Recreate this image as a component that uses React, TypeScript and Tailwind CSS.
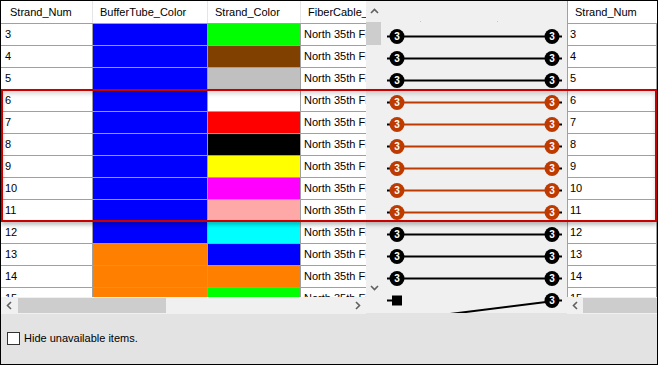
import React from "react";

const rows = [
  { n: 3, tube: "bg-[#0000ff]", strand: "bg-[#00ff00]" },
  { n: 4, tube: "bg-[#0000ff]", strand: "bg-[#804000]" },
  { n: 5, tube: "bg-[#0000ff]", strand: "bg-[#c0c0c0]" },
  { n: 6, tube: "bg-[#0000ff]", strand: "bg-white" },
  { n: 7, tube: "bg-[#0000ff]", strand: "bg-[#ff0000]" },
  { n: 8, tube: "bg-[#0000ff]", strand: "bg-black" },
  { n: 9, tube: "bg-[#0000ff]", strand: "bg-[#ffff00]" },
  { n: 10, tube: "bg-[#0000ff]", strand: "bg-[#ff00ff]" },
  { n: 11, tube: "bg-[#0000ff]", strand: "bg-[#ffa8a8]" },
  { n: 12, tube: "bg-[#0000ff]", strand: "bg-[#00ffff]" },
  { n: 13, tube: "bg-[#ff8000]", strand: "bg-[#0000ff]" },
  { n: 14, tube: "bg-[#ff8000]", strand: "bg-[#ff8000]" },
  { n: 15, tube: "bg-[#ff8000]", strand: "bg-[#00ff00]" },
];

const isSelected = (n: number) => n >= 6 && n <= 11;

function Chevron({ dir }: { dir: "up" | "down" | "left" | "right" }) {
  const d = {
    up: "M1 6 L4.5 2.5 L8 6",
    down: "M1 3 L4.5 6.5 L8 3",
    left: "M6 1 L2.5 4.5 L6 8",
    right: "M3 1 L6.5 4.5 L3 8",
  }[dir];
  return (
    <svg width="9" height="9" viewBox="0 0 9 9">
      <path d={d} fill="none" stroke="#606060" strokeWidth="1.6" />
    </svg>
  );
}

function Node({ x, y, fill }: { x: number; y: number; fill: string }) {
  return (
    <g>
      <circle cx={x} cy={y} r="7.5" fill={fill} />
      <text
        x={x}
        y={y + 3.6}
        textAnchor="middle"
        fontSize="10"
        fontWeight="bold"
        fontFamily="'Liberation Sans', sans-serif"
        fill="#ffffff"
      >
        3
      </text>
    </g>
  );
}

function Connectors() {
  return (
    <svg width="185" height="312" viewBox="0 0 185 312" className="block">
      <rect x="38" y="20" width="1" height="1" fill="#c8c8c8" />
      <rect x="115" y="20" width="1" height="1" fill="#c8c8c8" />
      {rows.map((r, i) => {
        const y = 35.5 + 22 * i;
        const color = isSelected(r.n) ? "#bd3a00" : "#000000";
        if (r.n === 15) {
          return (
            <g key={r.n}>
              <line x1="5" x2="11" y1={y} y2={y} stroke="#000" strokeWidth="2" />
              <rect x="10" y={y - 5} width="10" height="10" fill="#000" />
              <line x1="164" y1={y + 1.5} x2="0" y2={y + 22} stroke="#000" strokeWidth="2" />
              <line x1="172" x2="180" y1={y} y2={y} stroke="#000" strokeWidth="2" />
              <Node x={170} y={y} fill="#000" />
            </g>
          );
        }
        return (
          <g key={r.n}>
            <line x1="5" x2="12" y1={y} y2={y} stroke="#000" strokeWidth="2" />
            <line x1="173" x2="180" y1={y} y2={y} stroke="#000" strokeWidth="2" />
            <line x1="15" x2="170" y1={y} y2={y} stroke={color} strokeWidth="2" />
            <Node x={15} y={y} fill={color} />
            <Node x={170} y={y} fill={color} />
          </g>
        );
      })}
    </svg>
  );
}

function LeftGrid() {
  return (
    <div className="flex h-full w-[381px]">
      <div className="flex w-[365px] flex-col">
        {/* header */}
        <div className="flex h-[23px] shrink-0 border-b border-[#a0a0a0] bg-white leading-[22px]">
          <div className="w-[92px] border-r border-[#e5e5e5] pl-[9px]">Strand_Num</div>
          <div className="w-[115px] border-r border-[#e5e5e5] pl-[7px]">BufferTube_Color</div>
          <div className="w-[93px] border-r border-[#e5e5e5] pl-[7px]">Strand_Color</div>
          <div className="flex-1 overflow-hidden whitespace-nowrap pl-[7px]">FiberCable_ID</div>
        </div>
        {/* body */}
        <div className="h-[273px] shrink-0 overflow-hidden bg-white">
          {rows.map((r) => (
            <div key={r.n} className="flex h-[22px] border-b border-[#a0a0a0] leading-[21px]">
              <div className="w-[92px] border-r border-[#a0a0a0] pl-[4px]">{r.n}</div>
              <div className={`w-[115px] border-r border-[#a0a0a0] ${r.tube}`} />
              <div className={`w-[93px] border-r border-[#a0a0a0] ${r.strand}`} />
              <div className="flex-1 overflow-hidden whitespace-nowrap pl-[3px]">North 35th Fiber Cable</div>
            </div>
          ))}
        </div>
        {/* horizontal scrollbar */}
        <div className="flex h-[17px] shrink-0 items-center bg-[#f0f0f0]">
          <div className="flex w-[17px] justify-center">
            <Chevron dir="left" />
          </div>
          <div className="h-[15px] w-[148px] bg-[#cdcdcd]" />
          <div className="flex-1" />
          <div className="flex w-[17px] justify-center">
            <Chevron dir="right" />
          </div>
        </div>
      </div>
      {/* vertical scrollbar */}
      <div className="flex w-[16px] flex-col bg-[#f0f0f0]">
        <div className="flex h-[21px] items-center justify-center">
          <Chevron dir="up" />
        </div>
        <div className="h-[23px] w-[15px] bg-[#cdcdcd]" />
        <div className="flex-1" />
        <div className="flex h-[17px] items-center justify-center">
          <Chevron dir="down" />
        </div>
        <div className="h-[17px]" />
      </div>
    </div>
  );
}

function RightGrid() {
  return (
    <div className="flex h-full w-[90px] flex-col">
      <div className="h-[23px] shrink-0 border-b border-l border-[#a0a0a0] bg-white pl-[7px] leading-[22px]">
        Strand_Num
      </div>
      <div className="h-[273px] shrink-0 overflow-hidden border-l border-[#a0a0a0] bg-white">
        {rows.map((r) => (
          <div key={r.n} className="h-[22px] border-b border-r border-[#a0a0a0] pl-[2px] leading-[21px]">
            {r.n}
          </div>
        ))}
      </div>
      <div className="flex h-[17px] shrink-0 items-center bg-[#f0f0f0]">
        <div className="flex w-[16px] justify-center">
          <Chevron dir="left" />
        </div>
        <div className="h-[15px] flex-1 bg-[#cdcdcd]" />
      </div>
    </div>
  );
}

export default function App() {
  return (
    <div className="relative flex h-[365px] w-[658px] flex-col border border-black bg-[#e3e3e3] font-['Liberation_Sans',sans-serif] text-[11px] text-black">
      <div className="flex h-[312px] shrink-0">
        <LeftGrid />
        <div className="w-[185px] bg-[#f0f0f0]">
          <Connectors />
        </div>
        <RightGrid />
      </div>
      <div className="flex flex-1 items-center pl-[6px]">
        <div className="h-[13px] w-[13px] border border-[#333333] bg-white" />
        <span className="ml-[4px]">Hide unavailable items.</span>
      </div>

      {/* selection highlight */}
      <div className="pointer-events-none absolute left-0 top-[88px] h-[133px] w-[656px] border-2 border-[#c80000] shadow-[0_3px_4px_rgba(0,0,0,0.25),inset_0_3px_4px_rgba(0,0,0,0.15)]" />
    </div>
  );
}
